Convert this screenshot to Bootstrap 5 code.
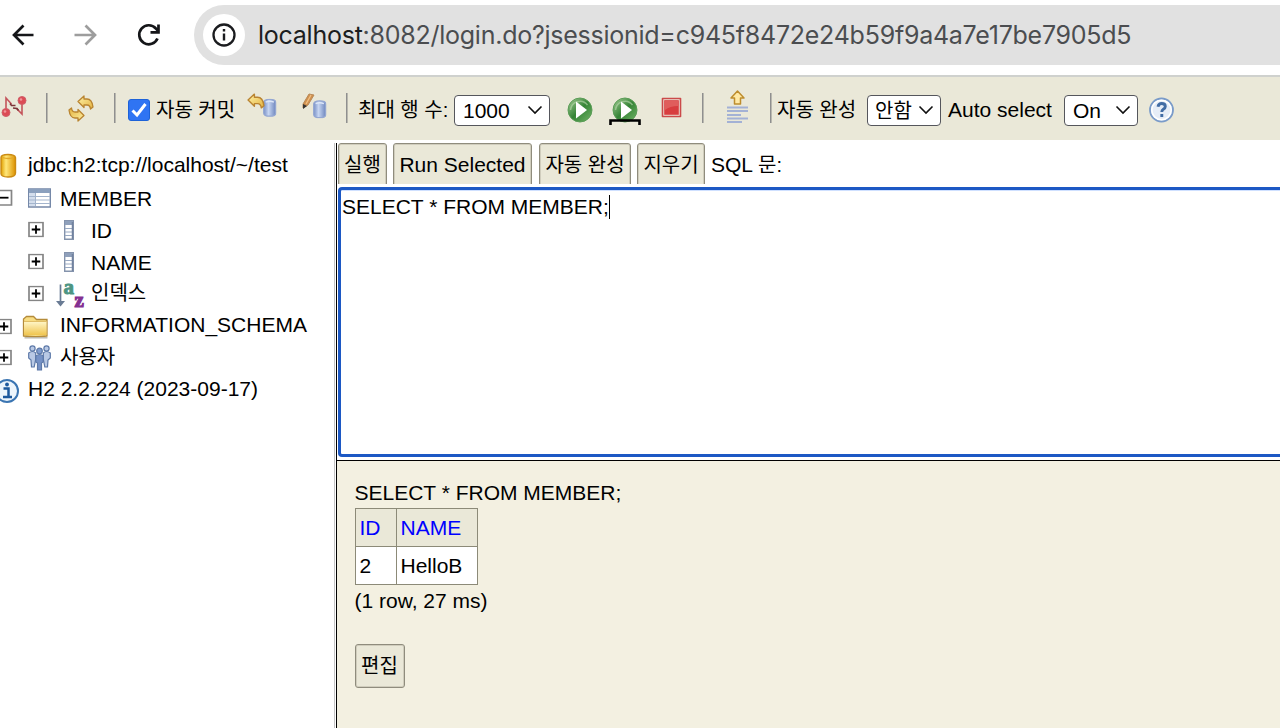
<!DOCTYPE html>
<html lang="ko">
<head>
    <meta charset="UTF-8">
    <meta name="viewport" content="width=device-width, initial-scale=1.0">
    <title>H2 Console</title>
    <link href="https://cdn.jsdelivr.net/npm/bootstrap@5.3.0/dist/css/bootstrap.min.css" rel="stylesheet">
    <style>
        body { font-family: "Liberation Sans", "Noto Sans CJK KR", sans-serif; font-size: 21px; line-height: 32px; color: #000; }
        svg { display: block; overflow: visible; flex: none; }
        .ko { font-size: 20px; }

        .browser-bar { height: 75px; padding-bottom: 5px; }
        .nav-icons { width: 194px; }
        .address { height: 60px; background: #e1e1e1; border-radius: 30px 0 0 30px; padding-left: 9px; font-family: Inter, sans-serif; font-size: 25px; color: #4b4d50; }
        .address b { font-weight: 400; color: #1c1d20; }
        .site-info { width: 42px; height: 42px; margin-right: 13px; }
        #url { letter-spacing: -.25px; }

        .toolbar { height: 65px; border-top: 2px solid #cfd1ce; background: #eae8d8; display: grid; align-items: center; padding-top: 3px;
            grid-template-columns: 46px 21px 47px 14px 28px 91px 55px 44px 12px 96px 113px 42px 52px 41px 24px 44px 7px 90px 81px 116px 85px 1fr; }
        .sep { width: 1px; height: 30px; background: #8f8f8f; border-right: 1px solid #b9b8af; box-sizing: content-box; margin-bottom: 5px; }
        .toolbar .form-check-input { width: 22px; height: 22px; margin: 0; border-radius: 3px; background-color: #2f74f3; border-color: #1d62d8; background-size: 22px 22px;
            background-image: url("data:image/svg+xml,%3Csvg xmlns='http://www.w3.org/2000/svg' viewBox='0 0 22 22'%3E%3Cpath d='m4.500 11.500 4.500 4.500L17.500 5' fill='none' stroke='%23fff' stroke-width='3'/%3E%3C/svg%3E"); }
        .toolbar .form-select { height: 31px; padding: 0 0 0 8px; border: 1px solid #55565c; border-radius: 4px; color: #000; font-size: 21px; line-height: 30px;
            background-image: url("data:image/svg+xml,%3Csvg xmlns='http://www.w3.org/2000/svg' viewBox='0 0 16 10'%3E%3Cpath d='M1.500 1.500 8 8l6.500-6.500' fill='none' stroke='%23111' stroke-width='1.600'/%3E%3C/svg%3E");
            background-size: 16px 10px; background-position: right 6px center; }
        .toolbar .form-select.ko { font-size: 20px; padding-left: 7px; }
        .w-rows { width: 96px; }
        .w-mode { width: 74px; }

        .workspace { height: 588px; padding-top: 3px; }
        .tree { width: 335px; border-right: 1px solid #c4c4c4; padding-top: 6px; }
        .tree-row { height: 32px; white-space: nowrap; }
        .tree-row.level-2 { padding-left: 31px; }
        .main-pane { margin-left: 1px; border-left: 1px solid #000; min-width: 0; }

        .query-buttons { height: 41px; overflow: hidden; padding-left: 1px; }
        .h2-btn { height: 44px; padding: 0; background: #eae8d8; border: 1px solid #8f8c7d; border-radius: 3px; box-shadow: inset 0 0 0 1px #d0cdbd; color: #000; font-size: 21px; line-height: 40px; --bs-btn-hover-bg: #dddac6; }
        .h2-btn.ko { font-size: 20px; line-height: 41px; }
        .query-box { height: 270px; margin: 3px 0 3px 1px; border: 3px solid #1c58c4; border-right: 0; border-radius: 4px 0 0 4px; box-shadow: inset 0 1px #cfe0ff; padding: 0 0 0 1px; font-size: 21px; line-height: 34px; color: #000; }
        .query-box [contenteditable] { outline: 0; }
        .caret { width: 1px; height: 24px; background: #000; margin-top: 5px; }

        .result { border-top: 1px solid #000; background: #f3f0e1; padding: 16px 0 0 17.500px; }
        .result table { border-collapse: collapse; line-height: 36px; margin-top: -1px; }
        .result td, .result th { border: 1px solid #8c8a78; height: 38px; padding: 0 4px; background: #fff; font-weight: 400; }
        .result th { background: #eae8d8; color: #00f; }
        .result th:first-child { width: 41px; }
        .result th:last-child { width: 81px; }
        .edit-btn { width: 50px; margin-top: 27px; }
    </style>
</head>
<body class="bg-white overflow-hidden">
    <svg width="0" height="0" class="position-absolute">
        <defs>
            <linearGradient id="gold" x2="1" y2="1"><stop stop-color="#fff3a8"/><stop offset="1" stop-color="#e3b13e"/></linearGradient>
            <linearGradient id="gold-h"><stop stop-color="#e0a000"/><stop offset=".35" stop-color="#ffe77a"/><stop offset="1" stop-color="#dc9200"/></linearGradient>
            <linearGradient id="folder-fill" x2="0" y2="1"><stop stop-color="#fff6c8"/><stop offset="1" stop-color="#f0c54f"/></linearGradient>
            <linearGradient id="blue-h"><stop stop-color="#7890c6"/><stop offset=".4" stop-color="#c6d5f1"/><stop offset="1" stop-color="#6e86be"/></linearGradient>
            <linearGradient id="green" x2="1" y2="1"><stop stop-color="#a8cf98"/><stop offset=".5" stop-color="#358436"/><stop offset="1" stop-color="#74b568"/></linearGradient>
            <symbol id="barrel" viewBox="0 0 13 18" preserveAspectRatio="none"><path d="M.7 4Q.7.8 6.500.8T12.300 4v10q0 3.200-5.800 3.200T.7 14Z" fill="url(#blue-h)" stroke="#94a7d2" stroke-width="1.300"/><path d="M2.500 3.500q4-1.700 8 0" fill="none" stroke="#dce6f8" stroke-width="1.500"/></symbol>
            <symbol id="back" viewBox="0 0 17 15"><path d="M1 6.500 7 1v3h3q5 0 6 8l-2.500 2q-.5-4-3.500-4H7v2.500Z" fill="url(#gold)" stroke="#b98431" stroke-width="1.300" stroke-linejoin="round"/></symbol>
            <symbol id="play" viewBox="0 0 26 26"><circle cx="13" cy="13" r="12" fill="url(#green)" stroke="#5b9d57"/><path d="M3.500 13a9.500 9.500 0 0 1 17-5" fill="none" stroke="#b9d9ad" stroke-width="1.500" opacity=".6"/><path d="M9 4.500v17L20 13Z" fill="#fff"/></symbol>
            <symbol id="plus" viewBox="0 0 16 16"><path d="M1 1h14v14H1Z" fill="#fff" stroke="#858585" stroke-width="1.700"/><path d="M3.700 8h8.600M8 3.700v8.600" stroke="#000" stroke-width="1.800"/></symbol>
            <symbol id="column" viewBox="0 0 10 20"><path d="M.7.7h8.600v18.600H.7Z" fill="#fff" stroke="#8493ac" stroke-width="1.400"/><path d="M1 1h8v4H1Z" fill="#8fa0bb"/><path d="M1 8.500h8M1 12h8M1 15.500h8" stroke="#9aaac3"/><path d="M8.500 2v17" stroke="#71829f" stroke-width="1.500"/></symbol>
        </defs>
    </svg>

    <header class="browser-bar d-flex align-items-center">
        <div class="nav-icons d-flex">
            <svg width="194" height="30" viewBox="0 0 194 30" fill="none" stroke-width="2.700">
                <path d="M33.500 15H14M23.500 5.500 14 15l9.500 9.500" stroke="#151619"/>
                <path d="M74.500 15H95M85.500 5.500 95 15l-9.500 9.500" stroke="#9d9d9d"/>
                <path d="M157.500 18.500a9.500 9.500 0 1 1-1.600-10l2.600 2.700M158.500 4.500v7.800h-8" stroke="#151619"/>
            </svg>
        </div>
        <div class="address d-flex align-items-center flex-grow-1">
            <div class="site-info bg-white rounded-circle d-flex align-items-center justify-content-center">
                <svg width="24" height="24" viewBox="0 0 24 24"><circle cx="12" cy="12" r="10.500" fill="none" stroke="#1b1c1f" stroke-width="2.300"/><path d="M12 10.500v7M12 6v2.500" stroke="#1b1c1f" stroke-width="2.400"/></svg>
            </div>
            <span id="url"><b>localhost</b>:8082/login.do?jsessionid=c945f8472e24b59f9a4a7e17be7905d5</span>
        </div>
    </header>

    <div class="toolbar text-nowrap">
        <!-- disconnect -->
        <svg width="28" height="26" viewBox="0 0 28 26">
            <path d="M6 15V1l5.500 6M22 4v13l-5.500-5.500" fill="none" stroke="#c4545b" stroke-width="1.600"/>
            <path d="m10 6.500 1.500 2h4M13 11l4 .5 1.500 2" fill="none" stroke="#7c3438" stroke-width="1.600"/>
            <circle cx="6" cy="15.500" r="4" fill="#dc4b55" stroke="#d0606a"/><circle cx="22" cy="3.500" r="4" fill="#dc4b55" stroke="#d0606a"/>
            <circle cx="5" cy="14.500" r="1.300" fill="#f1959a"/><circle cx="21" cy="2.500" r="1.300" fill="#f1959a"/>
        </svg>
        <div class="sep"></div>
        <svg width="28" height="28" viewBox="0 0 28 28">
            <use href="#back" x="10" y="-1" width="17" height="15"/>
            <use href="#back" x="0" y="0" width="17" height="15" transform="matrix(-1 0 0 -1 18 26)"/>
        </svg>
        <div class="sep"></div>
        <input class="form-check-input" type="checkbox" id="autocommit" checked>
        <label class="ko" for="autocommit">자동 커밋</label>
        <svg width="30" height="26" viewBox="0 0 30 26">
            <use href="#barrel" x="16" y="1.500" width="13.500" height="18.500"/>
            <use href="#back" x="0" y="-4" width="18" height="16"/>
        </svg>
        <svg width="26" height="26" viewBox="0 0 26 26">
            <use href="#barrel" x="11" y="3" width="13.500" height="18.500"/>
            <path d="M7-3 12-2 6 8l-5 3V7Z" fill="#cf8f4d" stroke="#b98b5a"/><path d="m9-2-5 9" stroke="#f0be83" stroke-width="1.300"/><path d="m1 7 4 2-4 3Z" fill="#333"/>
        </svg>
        <div class="sep"></div>
        <label class="ko" for="maxrows">최대 행 수:</label>
        <select class="form-select w-rows" id="maxrows"><option>1000</option></select>
        <svg width="26" height="26"><use href="#play" width="26" height="26"/></svg>
        <svg width="32" height="28" viewBox="0 0 32 28"><use href="#play" x="3" y="1" width="26" height="26"/><path d="M1.500 29v-4.500h29V29" fill="none" stroke="#000" stroke-width="2.600"/></svg>
        <svg width="21" height="26" viewBox="0 0 21 26"><path d="M1.500 1.500h18v18h-18Z" fill="#eee4d9" stroke="#cb4a4a" stroke-width="1.600" stroke-linejoin="round"/><path d="M3.200 3.200h14.600v14.600H3.200Z" fill="#d83d3f"/><path d="M4 4h13v5q-8 0-13 4Z" fill="#e05d5c"/></svg>
        <div class="sep"></div>
        <svg width="23" height="32" viewBox="0 0 23 32">
            <path d="m11.500-3 6.500 7h-3.500v6h-6V4H5Z" fill="#ffe9a5" stroke="#be8d2d" stroke-width="1.500" stroke-linejoin="round"/>
            <path d="M1 13.500h21M1 17h21M1 21h14M1 24.500h21M1 28h15" stroke="#a3b1d5" stroke-width="2"/>
        </svg>
        <div class="sep"></div>
        <label class="ko" for="complete">자동 완성</label>
        <select class="form-select ko w-mode" id="complete"><option>안함</option></select>
        <label for="autoselect">Auto select</label>
        <select class="form-select w-mode" id="autoselect"><option>On</option></select>
        <svg width="26" height="26" viewBox="0 0 26 26"><circle cx="12.500" cy="13" r="11.500" fill="#e6edf7" stroke="#7a9bc9" stroke-width="1.800"/><circle cx="12.500" cy="13" r="9.700" fill="none" stroke="#fff" stroke-width="1.500"/><path d="M9 9.800q.5-3.300 3.700-3.300 3.600 0 3.600 3 0 1.600-2 2.800-1.500.9-1.500 2.700M12.800 17v3" fill="none" stroke="#426da5" stroke-width="2.900"/></svg>
    </div>

    <div class="workspace d-flex">
        <nav class="tree flex-shrink-0">
            <div class="tree-row d-flex align-items-center">
                <svg width="28" height="32" viewBox="0 0 28 32"><path d="M1 8.500Q1 5.500 8 5.500t7.500 3v15.500q0 4-7.500 4t-7-4Z" fill="url(#gold-h)" stroke="#cb8b13" stroke-width="1.400"/><path d="M2.500 8.500q5.500 2 11.500 0" fill="none" stroke="#e2a728" stroke-width="1.300"/></svg>
                <span>jdbc:h2:tcp://localhost/~/test</span>
            </div>
            <div class="tree-row d-flex align-items-center">
                <svg width="28" height="32"><path d="M-3 9.500h14.500v14.500H-3Z" fill="#fff" stroke="#858585" stroke-width="1.700"/><path d="M0 16.700h8.500" stroke="#000" stroke-width="1.800"/></svg>
                <svg width="32" height="32"><path d="M.7 8h21.600v18H.7Z" fill="#fff" stroke="#7588a8" stroke-width="1.400"/><path d="M1 8h21v4H1Z" fill="#8ba0be"/><path d="M1 12h6v13H1Z" fill="#d4deed"/><path d="M1 15.500h21M1 19h21M1 22.500h21M7.500 12v13" stroke="#a4b5cd"/></svg>
                <span class="pt-1">MEMBER</span>
            </div>
            <div class="tree-row level-2 d-flex align-items-center">
                <svg width="28" height="32"><use href="#plus" x="-3" y="8.500" width="16" height="16"/></svg>
                <svg width="32" height="32"><use href="#column" x="5" y="7" width="10" height="20"/></svg>
                <span class="pt-1">ID</span>
            </div>
            <div class="tree-row level-2 d-flex align-items-center">
                <svg width="28" height="32"><use href="#plus" x="-3" y="8.500" width="16" height="16"/></svg>
                <svg width="32" height="32"><use href="#column" x="5" y="7" width="10" height="20"/></svg>
                <span class="pt-1">NAME</span>
            </div>
            <div class="tree-row level-2 d-flex align-items-center">
                <svg width="28" height="32"><use href="#plus" x="-3" y="8.500" width="16" height="16"/></svg>
                <svg width="32" height="32" font-family="Liberation Serif, serif" font-weight="700"><path d="M1.500 7.500v19" stroke="#697b94" stroke-width="1.700"/><path d="M-3 24h9L1.500 29.500Z" fill="#697b94"/><text x="4.500" y="17" font-size="21" fill="#4d9583" stroke="#4d9583" stroke-width=".9">a</text><text x="15.500" y="30" font-size="21" fill="#843091" stroke="#843091" stroke-width="1.200">z</text></svg>
                <span class="ko">인덱스</span>
            </div>
            <div class="tree-row d-flex align-items-center">
                <svg width="28" height="32"><use href="#plus" x="-4" y="9.500" width="16" height="16"/></svg>
                <svg width="32" height="32"><path d="M-4.500 27V10l3-2.500h7l3 3h10.500v16.500q-11 1.500-23.500 0Z" fill="#f8dd83" stroke="#b48b3a" stroke-width="1.300"/><path d="M-4 12.500h22.500V26H-4Z" fill="url(#folder-fill)"/><path d="M-4 12.500h22.500" stroke="#e0bd66"/><path d="M-3.500 28.800h23" stroke="#b9b5a9" stroke-width="1.400"/></svg>
                <span>INFORMATION_SCHEMA</span>
            </div>
            <div class="tree-row d-flex align-items-center">
                <svg width="28" height="32"><use href="#plus" x="-4" y="8.500" width="16" height="16"/></svg>
                <svg width="32" height="32" fill="#b9c9e5" stroke="#5d79a8" stroke-width="1.200">
                    <circle cx="4.500" cy="7.500" r="2.600"/><path d="M.7 12q4-3 7 0v6l-1.500 8H3.500L3 19 .7 17Z"/>
                    <circle cx="18.500" cy="7.500" r="2.600"/><path d="M22.300 12q-4-3-7 0v6l1.500 8h2.700l.5-7 2.300-2Z"/>
                    <circle cx="11.500" cy="10" r="2.800" fill="#7e9bce"/><path d="M7.800 15q4-3 7.400 0v6l-1.700 1v7h-4v-7l-1.700-1Z" fill="#7591c5"/>
                </svg>
                <span class="ko">사용자</span>
            </div>
            <div class="tree-row d-flex align-items-center">
                <svg width="28" height="32"><circle cx="7" cy="18" r="11" fill="#edf5fc" stroke="#3b75b2" stroke-width="2"/><path d="M3.500 15.500h5v8.500M3 24h9" fill="none" stroke="#1d599d" stroke-width="2.500"/><circle cx="7" cy="11.500" r="1.900" fill="#1d599d"/></svg>
                <span>H2 2.2.224 (2023-09-17)</span>
            </div>
        </nav>

        <main class="main-pane d-flex flex-column flex-grow-1">
            <div class="query-buttons d-flex flex-shrink-0">
                <button class="btn h2-btn ko" style="width:49px;margin-right:6px">실행</button>
                <button class="btn h2-btn" style="width:139px;margin-right:7px">Run Selected</button>
                <button class="btn h2-btn ko" style="width:92px;margin-right:6px">자동 완성</button>
                <button class="btn h2-btn ko" style="width:68px;margin-right:6px">지우기</button>
                <span class="pt-1" style="line-height:36px">SQL <span class="ko">문:</span></span>
            </div>
            <div class="query-box d-flex flex-shrink-0">
                <span contenteditable="true" spellcheck="false">SELECT * FROM MEMBER;</span>
                <span class="caret"></span>
            </div>
            <section class="result flex-grow-1">
                <div>SELECT * FROM MEMBER;</div>
                <table>
                    <tr><th>ID</th><th>NAME</th></tr>
                    <tr><td>2</td><td>HelloB</td></tr>
                </table>
                <div>(1 row, 27 ms)</div>
                <button class="btn h2-btn edit-btn ko">편집</button>
            </section>
        </main>
    </div>

    <script src="https://cdn.jsdelivr.net/npm/bootstrap@5.3.0/dist/js/bootstrap.bundle.min.js"></script>
</body>
</html>
